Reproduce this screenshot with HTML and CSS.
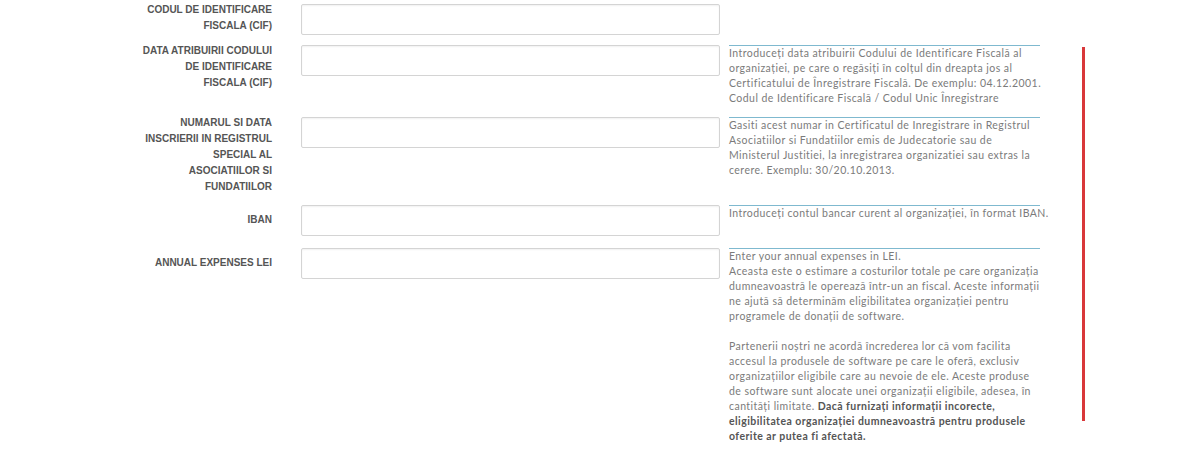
FILE: index.html
```html
<!DOCTYPE html>
<html lang="ro">
<head>
  <meta charset="UTF-8">
  <meta name="viewport" content="width=device-width, initial-scale=1.0">
  <title>Date organizatie</title>
  <link rel="stylesheet" href="styles.css">
</head>
<body>
  <form class="org-form">
    <div class="form-row">
      <label class="field-label" for="cif">Codul de identificare<br>fiscala (CIF)</label>
      <input type="text" id="cif" class="field-input">
    </div>

    <div class="form-row">
      <label class="field-label" for="cifDate">Data atribuirii codului<br>de identificare<br>fiscala (CIF)</label>
      <input type="text" id="cifDate" class="field-input">
      <div class="help-block nowrap">
        Introduceți data atribuirii Codului de Identificare Fiscală al<br>
        organizației, pe care o regăsiți în colțul din dreapta jos al<br>
        Certificatului de Înregistrare Fiscală. De exemplu: 04.12.2001.<br>
        Codul de Identificare Fiscală / Codul Unic Înregistrare
      </div>
    </div>

    <div class="form-row">
      <label class="field-label" for="regNo">Numarul si data<br>inscrierii in registrul<br>special al<br>asociatiilor si<br>fundatiilor</label>
      <input type="text" id="regNo" class="field-input">
      <div class="help-block">
        Gasiti acest numar in Certificatul de Inregistrare in Registrul Asociatiilor si Fundatiilor emis de Judecatorie sau de Ministerul Justitiei, la inregistrarea organizatiei sau extras la cerere. Exemplu: 30/20.10.2013.
      </div>
    </div>

    <div class="form-row form-row-loose">
      <label class="field-label single" for="iban">IBAN</label>
      <input type="text" id="iban" class="field-input">
      <div class="help-block nowrap">
        Introduceți contul bancar curent al organizației, în format IBAN.
      </div>
    </div>

    <div class="form-row">
      <label class="field-label single" for="expenses">Annual expenses LEI</label>
      <input type="text" id="expenses" class="field-input">
      <div class="help-block">
        Enter your annual expenses in LEI.<br>
        Aceasta este o estimare a costurilor totale pe care organizația dumneavoastră le operează într-un an fiscal. Aceste informații ne ajută să determinăm eligibilitatea organizației pentru programele de donații de software.
        <br><br>
        Partenerii noștri ne acordă încrederea lor că vom facilita accesul la produsele de software pe care le oferă, exclusiv organizațiilor eligibile care au nevoie de ele. Aceste produse de software sunt alocate unei organizații eligibile, adesea, în cantități limitate. <strong>Dacă furnizați informații incorecte, eligibilitatea organizației dumneavoastră pentru produsele oferite ar putea fi afectată.</strong>
      </div>
    </div>
  </form>

  <div class="scroll-marker"></div>
</body>
</html>
```

FILE: styles.css
```css
body {
  margin: 0;
  padding: 0;
  background-color: #fff;
  font-family: "Liberation Sans", Arial, sans-serif;
}
.org-form {
  padding: 4px 0 0 132px;
}
.form-row {
  display: grid;
  grid-template-columns: 169px 419px 320px;
  align-items: start;
  margin-bottom: 10px;
}
.form-row-loose {
  margin-bottom: 12px;
}
.field-label {
  grid-column: 1;
  margin-top: -2px;
  padding-right: 29px;
  text-align: right;
  text-transform: uppercase;
  font-size: 10px;
  font-weight: bold;
  line-height: 16px;
  color: #555;
}
.field-label.single {
  margin-top: 7px;
}
.field-input {
  grid-column: 2;
  width: 100%;
  height: 31px;
  margin: 0;
  box-sizing: border-box;
  border: 1px solid #d4d4d4;
  border-radius: 2px;
  box-shadow: inset 0 1px 2px rgba(0, 0, 0, 0.06);
  background-color: #fff;
}
.help-block {
  grid-column: 3;
  margin-left: 9px;
  padding-bottom: 1px;
  border-top: 1px solid #7fb9cf;
  font-family: Lato, "Open Sans", sans-serif;
  font-size: 10.5px;
  letter-spacing: 0.45px;
  line-height: 15px;
  color: #7b7b7b;
}
.help-block.nowrap {
  white-space: nowrap;
}
.help-block strong {
  color: #555;
  font-weight: bold;
}
.scroll-marker {
  position: absolute;
  left: 1082px;
  top: 47px;
  width: 3px;
  height: 374px;
  background-color: #d9383a;
}
```
